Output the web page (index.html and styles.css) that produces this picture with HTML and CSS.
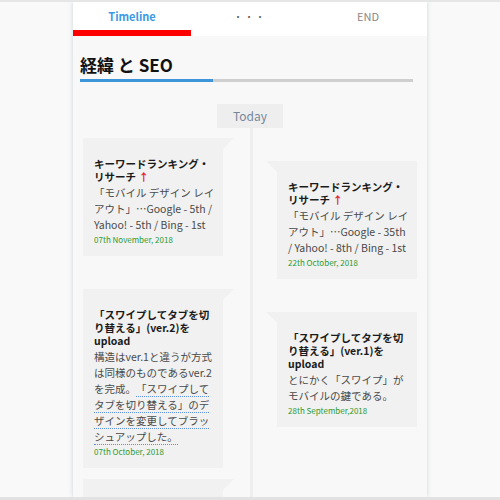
FILE: index.html
```html
<html>
<head>
<meta charset="UTF-8">
<meta name="viewport" content="width=device-width, initial-scale=1">
<title>経緯 と SEO</title>
<link rel="stylesheet" href="styles.css">
</head>
<body>
<div class="frame">
<div class="app">

<nav class="tabs">
<a class="tab active">Timeline</a>
<a class="tab dots">・・・</a>
<a class="tab">END</a>
</nav>

<div class="content">
<h1 class="title">経緯 と SEO</h1>
<div class="progress"><div class="progress-bar" style="width:40%"></div></div>

<div class="today">Today</div>

<div class="timeline">
<div class="col col-left">
<div class="card first">
<h2>キーワードランキング・リサーチ <span class="up">↑</span></h2>
<p>「モバイル デザイン レイアウト」…Google - 5th / Yahoo! - 5th / Bing - 1st</p>
<span class="date">07th November, 2018</span>
</div>
<div class="card">
<h2>「スワイプしてタブを切り替える」(ver.2)をupload</h2>
<p>構造はver.1と違うが方式は同様のものであるver.2を完成。<a class="ref">「スワイプしてタブを切り替える」のデザインを変更してブラッシュアップした。</a></p>
<span class="date">07th October, 2018</span>
</div>
<div class="card tight">
<h2>「スワイプ」をupload</h2>
<p>スワイプでページを切り替える。</p>
<span class="date">20th September, 2018</span>
</div>
</div>

<div class="line"></div>

<div class="col col-right">
<div class="card">
<h2>キーワードランキング・リサーチ <span class="up">↑</span></h2>
<p>「モバイル デザイン レイアウト」…Google - 35th / Yahoo! - 8th / Bing - 1st</p>
<span class="date">22th October, 2018</span>
</div>
<div class="card">
<h2>「スワイプしてタブを切り替える」(ver.1)をupload</h2>
<p>とにかく「スワイプ」がモバイルの鍵である。</p>
<span class="date">28th September,2018</span>
</div>
</div>
</div>
</div>

</div>
</div>
</body>
</html>
```

FILE: styles.css
```css
html{
    background:#f9f9f9;
}
body{
    margin:0;
    font-family:"Noto Sans CJK JP", "Noto Sans", sans-serif;
    color:#333;
}
.frame{
    height:500px;
    box-sizing:border-box;
    border-top:2px solid #e6e6e6;
    border-bottom:3px solid #e2e2e2;
    overflow:hidden;
}
.app{
    width:354px;
    height:100%;
    margin:0 auto;
    background:#f8f8f8;
    box-shadow:0 0 4px rgba(110,140,160,0.35);
}
.tabs{
    display:flex;
    background:#fff;
}
.tab{
    flex:1;
    height:34px;
    box-sizing:border-box;
    display:flex;
    align-items:center;
    justify-content:center;
    padding-bottom:6px;
    font-size:11px;
    color:#888;
}
.tab.active{
    color:#3b99e6;
    font-weight:bold;
    border-bottom:6px solid #f00;
    padding-bottom:0;
}
.tab.dots{
    color:#555;
    font-size:9px;
    letter-spacing:2px;
}
.content{
    padding:0 7px;
}
.title{
    margin:0;
    padding-top:17px;
    font-size:17px;
    line-height:24px;
    color:#111;
}
.progress{
    margin:2px 7px 0 0;
    height:3px;
    background:#cfcfcf;
}
.progress-bar{
    height:100%;
    background:#3d95da;
}
.today{
    width:66px;
    height:24px;
    margin:22px auto 0;
    background:#eeeeee;
    text-align:center;
    line-height:24px;
    font-size:12px;
    color:#75879a;
}
.timeline{
    display:grid;
    grid-template-columns:167px 3px 1fr;
    padding:0 3px;
}
.line{
    background:#eeeeee;
}
.col{
    display:flex;
    flex-direction:column;
}
.col-left{
    align-items:flex-start;
}
.col-right{
    align-items:flex-end;
}
.card{
    position:relative;
    width:140px;
    box-sizing:border-box;
    padding:19px 8px 9px 11px;
    margin-top:33px;
    background:#f1f1f1;
    text-spacing-trim:space-all;
}
.card.first{
    margin-top:10px;
}
.card.tight{
    margin-top:11px;
}
.col-left .card::after{
    content:"";
    position:absolute;
    top:0;
    left:100%;
    border-top:11px solid #f1f1f1;
    border-right:11px solid transparent;
}
.col-right .card::after{
    content:"";
    position:absolute;
    top:0;
    right:100%;
    border-top:11px solid #f1f1f1;
    border-left:11px solid transparent;
}
.card h2{
    margin:0 0 2px;
    font-size:10.5px;
    line-height:13px;
    font-weight:bold;
    color:#1a1a1a;
}
.up{
    color:#e31b1b;
}
.card p{
    margin:0;
    font-size:10.5px;
    line-height:16px;
    color:#4a4a4a;
}
.ref{
    border-bottom:1px dotted #5b8fe0;
}
.date{
    display:block;
    font-size:8px;
    line-height:14px;
    color:#2f9a2f;
}
```
